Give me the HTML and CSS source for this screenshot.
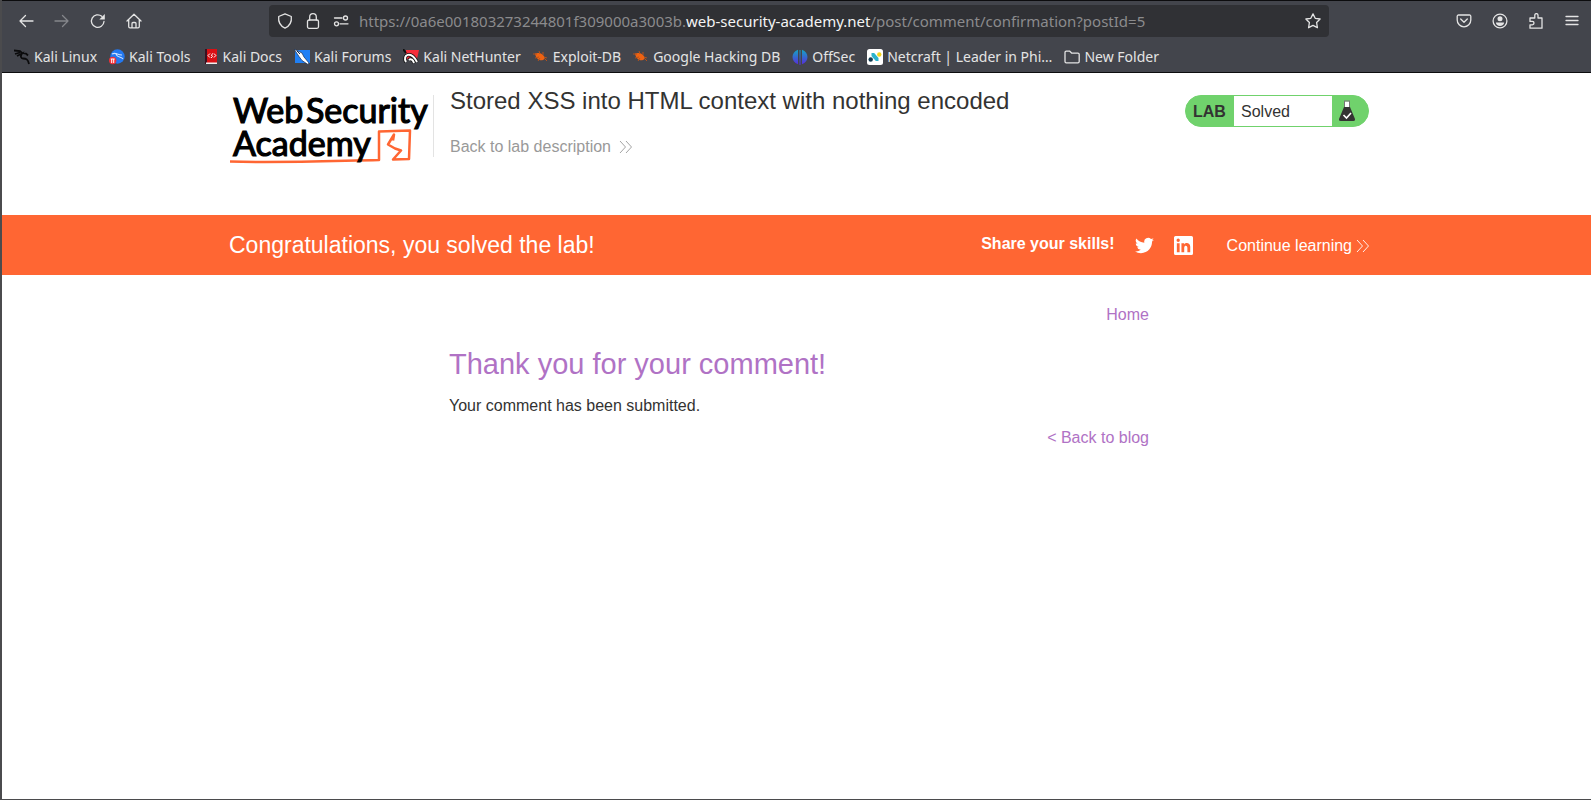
FILE: index.html
```html
<!DOCTYPE html>
<html lang="en">
<head>
<meta charset="utf-8">
<title>Stored XSS into HTML context with nothing encoded</title>
<link rel="stylesheet" href="styles.css">
</head>
<body>
<div class="window">
  <header class="chrome">
    <div class="toolbar">
      <div class="nav-buttons">
        <button type="button" aria-label="Back"><svg class="icon" viewBox="0 0 16 16"><path d="M15 8H2M7.500 2.500L2 8l5.500 5.500"/></svg></button>
        <button type="button" class="dim" aria-label="Forward" disabled><svg class="icon" viewBox="0 0 16 16"><path d="M1 8h13M8.500 2.500L14 8l-5.500 5.500"/></svg></button>
        <button type="button" aria-label="Reload"><svg class="icon" viewBox="0 0 16 16"><path d="M14 8.500A6.300 6.300 0 1 1 11.800 3.300"/><path class="solid" d="M14.800 1v5.500H9.300z"/></svg></button>
        <button type="button" aria-label="Home"><svg class="icon" viewBox="0 0 16 16"><path d="M1 8l7-6.800L15 8M2.700 6.700v6.800a1.300 1.300 0 0 0 1.300 1.300h8a1.300 1.300 0 0 0 1.300-1.300V6.700M6 14.500v-4a1 1 0 0 1 1-1h2a1 1 0 0 1 1 1v4"/></svg></button>
      </div>
      <div class="address">
        <svg class="icon" viewBox="0 0 16 16"><path d="M8 .900l6.300 2.600c.500 4.500-1.300 9.300-6.300 11.600C3 12.800 1.200 8 1.700 3.500z"/></svg>
        <svg class="icon" viewBox="0 0 16 16"><rect x="2.500" y="7" width="11" height="8.300" rx="1.500"/><path d="M4.700 7V4a3.300 3.300 0 0 1 6.600 0v3"/></svg>
        <svg class="icon" viewBox="0 0 16 16"><circle cx="12.500" cy="5" r="2"/><circle cx="3.500" cy="10.800" r="2"/><path d="M1.500 5h7.500M7 10.800h8"/></svg>
        <p class="url">https://0a6e001803273244801f309000a3003b.<span class="domain">web-security-academy.net</span>/post/comment/confirmation?postId=5</p>
        <button type="button" aria-label="Bookmark this page"><svg class="icon" viewBox="0 0 16 16"><path d="M8 .900l2.200 4.400 4.900.700-3.500 3.500.800 5.200L8 12.400l-4.400 2.300.800-5.200L.900 6l4.900-.700z"/></svg></button>
      </div>
      <div class="tools">
        <button type="button" aria-label="Save to Pocket"><svg class="icon" viewBox="0 0 16 16"><path d="M2.500 2h11A1.300 1.300 0 0 1 14.800 3.300V7a6.800 6.800 0 0 1-13.600 0V3.300A1.300 1.300 0 0 1 2.500 2zM4.700 6L8 9.200 11.300 6"/></svg></button>
        <button type="button" aria-label="Account"><svg class="icon" viewBox="0 0 16 16"><circle cx="8" cy="8" r="6.900"/><circle class="solid" cx="8" cy="5.800" r="2.500"/><path class="solid" d="M3.900 9.500h8.200c0 2-2 3.500-4.100 3.500S3.900 11.500 3.900 9.500z"/></svg></button>
        <button type="button" aria-label="Extensions"><svg class="icon" viewBox="0 0 16 16"><path d="M2 15.200V11.800h2.300a1.700 1.700 0 0 0 0-3.400H2V5h4.800V2.200a1.600 1.600 0 0 1 3.200 0V5h4v10.200z"/></svg></button>
        <button type="button" aria-label="Menu"><svg class="icon" viewBox="0 0 16 16"><path d="M2 3.500h12M2 7.500h12M2 11.500h12"/></svg></button>
      </div>
    </div>
    <nav class="bookmarks" aria-label="Bookmarks">
      <a href="#"><svg class="fav" viewBox="0 0 16 16"><path class="dragon" d="M0 1.500l6 .500 2 2 4 .500 2 2M1 5l5-1.500M3 7l5-2.500c-2 3-1 5 1 5 3 0 5 .500 6 5.500"/></svg>Kali Linux</a>
      <a href="#"><svg class="fav" viewBox="0 0 16 16"><circle cx="8.500" cy="7.500" r="7.200" fill="#2378f0"/><path d="M3 5c4-2 5 1 10 1M7 4c0 5 5 3 7 6" fill="none" stroke="#cfe2ff" stroke-width="1.100"/><circle cx="3.700" cy="11.500" r="3.700" fill="#ef3038"/><path d="M1.700 10h4M2.700 10v4M4.700 10v4" stroke="#fff"/></svg>Kali Tools</a>
      <a href="#"><svg class="fav" viewBox="0 0 16 16"><path d="M2 0h12v15H2z" fill="#d91014"/><path d="M2 0h2v15H2z" fill="#3b1020"/><path d="M3 13.500h11V15H3z" fill="#eee"/><path d="M7 4.500L5 6.500 6.800 8.500M11 4.500L12.800 6.500l-1.800 2M10 4.500L8.300 6l1.200 1.300L8 9" fill="none" stroke="#fff"/></svg>Kali Docs</a>
      <a href="#"><svg class="fav" viewBox="0 0 16 16"><path d="M1 1h15v13H1z" fill="#2080f5"/><path d="M0 0l8 4 2 4 5 6-1 1.500-6-4-3-4z" fill="#fff" stroke="#142b50" stroke-width=".700"/><path d="M3 2l3 3" stroke="#142b50"/></svg>Kali Forums</a>
      <a href="#"><svg class="fav" viewBox="0 0 16 16"><path d="M3 1h13L14 10H3z" fill="#f52d3a"/><path d="M0 0l3 4" stroke="#111" stroke-width="2"/><path d="M3 13C-1 6 8 1 14 13M6 11c2-2 4 0 5 3" fill="none" stroke="#111" stroke-width="3.600"/><path d="M3 13C-1 6 8 1 14 13M6 11c2-2 4 0 5 3" fill="none" stroke="#fff" stroke-width="2"/></svg>Kali NetHunter</a>
      <a href="#"><svg class="fav" viewBox="0 0 16 16"><path class="bug" d="M2 4.500c3-1 8-1 10 5-4 4-9 1-10-5z"/><path class="legs" d="M0 5h4M2 9l4-1M5 12l2-3M6 2l1 3M10 3v3M11 9l3 3M11 8l3 1"/></svg>Exploit-DB</a>
      <a href="#"><svg class="fav" viewBox="0 0 16 16"><path class="bug" d="M2 4.500c3-1 8-1 10 5-4 4-9 1-10-5z"/><path class="legs" d="M0 5h4M2 9l4-1M5 12l2-3M6 2l1 3M10 3v3M11 9l3 3M11 8l3 1"/></svg>Google Hacking DB</a>
      <a href="#"><svg class="fav" viewBox="0 0 16 16"><defs><linearGradient id="offsec" x2="0" y2="1"><stop stop-color="#13a5c4"/><stop offset="1" stop-color="#5a28dc"/></linearGradient></defs><path d="M6 .700v14.600C-1.300 12.500-1.300 3.500 6 .700zM10 .700v14.600c7.300-2.800 7.300-11.800 0-14.600zM7.500 1h1v15h-1z" fill="url(#offsec)"/></svg>OffSec</a>
      <a href="#"><svg class="fav" viewBox="0 0 16 16"><rect width="16" height="16" rx="2.500" fill="#fff"/><circle cx="12.300" cy="5.500" r="2.200" fill="#f4d61c"/><circle cx="3.700" cy="10.500" r="2.200" fill="#123c52"/><path d="M4.500 4h2.700l4.300 5V12H8.800L4.500 7z" fill="#2cb3cc"/></svg>Netcraft | Leader in Phi…</a>
      <a href="#"><svg class="fav icon" viewBox="0 0 16 16"><path d="M1 3.500A1.300 1.300 0 0 1 2.300 2.200h3.500l2 2h6A1.300 1.300 0 0 1 15.200 5.500v7a1.300 1.300 0 0 1-1.300 1.300H2.300A1.300 1.300 0 0 1 1 12.500z"/></svg>New Folder</a>
    </nav>
  </header>

  <main class="page">
    <section class="lab-header container">
      <a class="logo" href="#" aria-label="Web Security Academy">
        <svg viewBox="0 0 202 76">
          <path class="swoosh" d="M1 71.500C50 73 100 71 150 70L150 41.500l31-1-1 28.500-16 .500 8-9-6-2-7-4 6-10-1 6"/>
          <text x="4" y="33">Web</text>
          <text x="77" y="33">Security</text>
          <text x="4" y="66">Academy</text>
        </svg>
      </a>
      <div class="lab-title">
        <h2>Stored XSS into HTML context with nothing encoded</h2>
        <a href="#">Back to lab description <svg class="chevrons" viewBox="0 0 13 14"><path d="M1 1l5.500 6L1 13M7 1l5.500 6L7 13"/></svg></a>
      </div>
      <div class="lab-status">
        <span class="lab-tag">LAB</span>
        <span class="lab-state">Solved</span>
        <svg class="flask" viewBox="0 0 18 22"><path d="M6.500 1.500h5v6.500h-5z" fill="#fff"/><path d="M6 1h6M6.500 1v6M11.500 1v6" stroke="#777" fill="none"/><path d="M6 7h6l5 12q.500 2-1.500 2h-13q-2 0-1.500-2z" fill="#333332"/><path d="M5.500 15l3 3 4.500-5" fill="none" stroke="#fff" stroke-width="1.600"/></svg>
      </div>
    </section>

    <section class="banner">
      <div class="container banner-row">
        <h4>Congratulations, you solved the lab!</h4>
        <strong>Share your skills!</strong>
        <a class="share" href="#" aria-label="Share on Twitter"><svg viewBox="0 0 24 24"><path d="M23.900 4.600a10 10 0 0 1-2.800.800 4.900 4.900 0 0 0 2.200-2.700 9.700 9.700 0 0 1-3.100 1.200 4.900 4.900 0 0 0-8.400 4.500A14 14 0 0 1 1.700 3.200a4.900 4.900 0 0 0 1.500 6.500 4.900 4.900 0 0 1-2.200-.600v.100a4.900 4.900 0 0 0 3.900 4.800 5 5 0 0 1-2.200.100 4.900 4.900 0 0 0 4.600 3.400A9.900 9.900 0 0 1 0 19.500a14 14 0 0 0 7.500 2.200c9.100 0 14-7.500 14-14v-.600a10 10 0 0 0 2.400-2.500z"/></svg></a>
        <a class="share" href="#" aria-label="Share on LinkedIn"><svg viewBox="0 0 24 24"><path fill-rule="evenodd" d="M2 0h20a2 2 0 0 1 2 2v20a2 2 0 0 1-2 2H2a2 2 0 0 1-2-2V2a2 2 0 0 1 2-2zM3.600 9v11.500h3.500V9zM5.300 3.300a2.100 2.100 0 1 0 0 4.200 2.100 2.100 0 0 0 0-4.200zM9.400 9v11.500h3.500v-5.700c0-3.500 4-3.300 4 0v5.700h3.600v-7c0-5-5.500-5.800-7.700-2.900V9z"/></svg></a>
        <a class="continue" href="#">Continue learning <svg class="chevrons" viewBox="0 0 13 14"><path d="M1 1l5.500 6L1 13M7 1l5.500 6L7 13"/></svg></a>
      </div>
    </section>

    <section class="blog">
      <nav class="right"><a href="#">Home</a></nav>
      <h1>Thank you for your comment!</h1>
      <p>Your comment has been submitted.</p>
      <div class="right"><a href="#">&lt; Back to blog</a></div>
    </section>
  </main>
</div>
</body>
</html>
```
FILE: styles.css
```css
* { box-sizing: border-box; }

body {
  margin: 0;
  background: #fff;
  color: #333332;
  font: 16px/20px "Liberation Sans", Arial, sans-serif;
}

h1, h2, h4, p { margin: 0; font-weight: 400; }
a { color: inherit; text-decoration: none; }
button { padding: 0; border: 0; background: none; color: inherit; display: flex; }
svg { display: block; flex: none; }

.window {
  min-height: 100vh;
  display: flex;
  flex-direction: column;
  border-left: 2px solid #4b4b4d;
  border-bottom: 1px solid #4b4b4d;
}

.chrome {
  background: #43454c;
  color: #e4e4e4;
  border-top: 1px solid #0c0c0e;
  border-bottom: 1px solid #0c0c0e;
  font: 15px/20px "Noto Sans", sans-serif;
}

.icon {
  width: 16px;
  height: 16px;
  fill: none;
  stroke: currentColor;
  stroke-width: 1.3;
  stroke-linejoin: round;
  stroke-linecap: round;
}
.icon .solid { fill: currentColor; stroke: none; }
.dim { color: #85868b; }

.toolbar { display: flex; align-items: center; padding: 4px 11px 4px 16px; }
.nav-buttons, .tools { display: flex; gap: 20px; }
.tools { margin-left: 127px; }
.address {
  flex: 1;
  height: 32px;
  margin-left: 127px;
  padding: 0 8px;
  display: flex;
  align-items: center;
  gap: 12px;
  border-radius: 4px;
  background: #303135;
}
.url { flex: 1; margin-left: -2px; color: #8b8b8d; white-space: nowrap; overflow: hidden; }
.domain { color: #f4f4f4; }

.bookmarks { display: flex; gap: 12px; height: 31px; padding: 0 12px; font-size: 14px; white-space: nowrap; }
.bookmarks a { display: flex; align-items: center; gap: 4px; }
.fav { width: 16px; height: 16px; }
.dragon { fill: none; stroke: #0b0b0c; stroke-width: 1.8; }
.bug { fill: #ed6212; }
.legs { fill: none; stroke: #b4511c; }

.page { flex: 1; padding-left: 5px; }
.container { width: 100%; max-width: 1140px; margin: 0 auto; }

.lab-header { display: flex; align-items: flex-start; height: 142px; padding-top: 15px; }
.logo { margin-top: 2px; padding-right: 2px; }
.logo svg { width: 202px; height: 76px; }
.logo text {
  font: 34px Lato, sans-serif;
  fill: #000;
  stroke: #000;
  stroke-width: 1.2;
}
.swoosh { fill: none; stroke: #ff6633; stroke-width: 2.5; stroke-linejoin: round; }
.lab-title { flex: 1; margin-top: 7px; padding-left: 16px; border-left: 1px solid #e3e3e3; height: 62px; }
.lab-title h2 { margin-top: -8px; font-size: 24px; line-height: 28px; }
.lab-title a { display: flex; align-items: center; gap: 8px; margin-top: 22px; color: #999; }
.chevrons { width: 13px; height: 14px; fill: none; stroke: currentColor; stroke-width: 0.9; }

.lab-status {
  display: flex;
  align-items: center;
  width: 184px;
  height: 32px;
  margin-top: 7px;
  border: 1px solid #70d26c;
  border-radius: 16px;
  background: #70d26c;
}
.lab-tag { width: 48px; padding: 2px 0 0 7px; font-weight: 700; }
.lab-state { flex: 1; height: 30px; padding-left: 7px; line-height: 31px; background: #fff; }
.flask { width: 18px; height: 22px; margin: 0 12px 0 6px; }

.banner { margin-left: -5px; padding-left: 5px; background: #ff6633; color: #fff; }
.banner-row { display: flex; align-items: center; height: 60px; }
.banner h4 { flex: 1; font-size: 23px; line-height: 28px; }
.banner strong { padding-bottom: 2px; }
.share { margin-left: 20px; }
.share svg { width: 19px; height: 19px; fill: #fff; }
.continue { display: flex; align-items: center; gap: 4px; margin-left: 34px; padding-top: 2px; }

.blog { max-width: 700px; margin: 0 auto; padding-top: 30px; }
.blog a, .blog h1 { color: #b072c5; }
.right { text-align: right; }
.blog h1 { margin: 22px 0 15px; font-size: 29px; line-height: 34px; }
.blog p { margin-bottom: 12px; }
```
